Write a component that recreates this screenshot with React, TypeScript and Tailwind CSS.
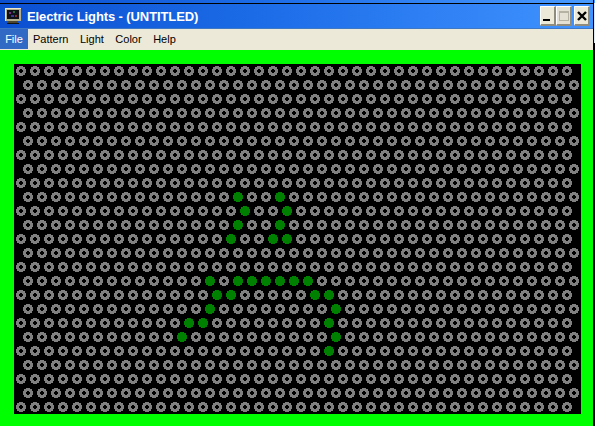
const ROWS = 25
const COLS = 40

// lit lights, keyed by row -> column indexes
const LIT: Record<number, number[]> = {
  9: [15, 18],
  10: [16, 19],
  11: [15, 18],
  12: [15, 18, 19],
  15: [13, 15, 16, 17, 18, 19, 20],
  16: [14, 15, 21, 22],
  17: [13, 22],
  18: [12, 13, 22],
  19: [11, 22],
  20: [22],
}

const DISC = "M3 0h4v1h2v2h1v4h-1v2h-2v1h-4v-1h-2v-2h-1v-4h1v-2h2z"
const HOLE = "M4 3v1h-1v2h1v1h2v-1h1v-2h-1v-1z"

function Light({ on }: { on: boolean }) {
  return (
    <svg width="10" height="10" viewBox="0 0 10 10" shapeRendering="crispEdges" className="shrink-0">
      <path fill={on ? "#008000" : "#808080"} fillRule="evenodd" d={on ? DISC : DISC + HOLE} />
    </svg>
  )
}

function TitleButton({ children, muted }: { children: React.ReactNode; muted?: boolean }) {
  return (
    <div
      className={`flex h-[20px] w-[16px] items-center justify-center rounded-[1px] border-t border-l border-t-white border-l-white border-r-2 border-b-2 border-r-[#8f8c7e] border-b-[#8f8c7e] ${muted ? "bg-[#e4e1d4]" : "bg-[#ece9d8]"}`}
    >
      {children}
    </div>
  )
}

function App() {
  return (
    <div className="flex h-[426px] w-[595px] overflow-hidden bg-black font-['Liberation_Sans',sans-serif]">
      <div className="flex w-[593px] shrink-0 flex-col bg-[#ece9d8]">
        <div className="h-[3px] shrink-0 bg-gradient-to-r from-[#0a4fd0] via-[#1f70ea] to-[#4a9bff]" />
        <div className="flex h-[26px] shrink-0 items-center justify-between border-t border-b border-t-black border-b-[#3f78c4] bg-gradient-to-r from-[#0a4fd0] via-[#1f70ea] to-[#4093ff] pr-[3px] pl-[5px]">
          <div className="flex items-center gap-[5px]">
            <svg width="17" height="17" viewBox="0 0 17 17" shapeRendering="crispEdges">
              <rect x="0" y="0" width="16" height="13" fill="#b3ae8c" />
              <rect x="0" y="0" width="16" height="1" fill="#ece8cc" />
              <rect x="0" y="0" width="1" height="13" fill="#ece8cc" />
              <rect x="2" y="2" width="12" height="9" fill="#101018" />
              <rect x="4" y="4" width="2" height="2" fill="#7a2a80" />
              <rect x="8" y="3" width="2" height="2" fill="#2a6a40" />
              <rect x="6" y="7" width="3" height="2" fill="#3a3a90" />
              <rect x="10" y="7" width="2" height="2" fill="#802a2a" />
              <rect x="3" y="13" width="10" height="2" fill="#4a4530" />
              <rect x="2" y="15" width="12" height="1" fill="#15140c" />
            </svg>
            <span className="text-[13px] leading-none font-bold tracking-[-0.1px] text-white">Electric Lights - (UNTITLED)</span>
          </div>
          <div className="flex items-center">
            <TitleButton>
              <div className="mt-[9px] mr-[2px] h-[2px] w-[7px] bg-black" />
            </TitleButton>
            <TitleButton muted>
              <div className="h-[10px] w-[10px] border border-t-2 border-[#b5b2a4]" />
            </TitleButton>
            <div className="ml-[2px]">
              <TitleButton>
                <svg width="10" height="10" viewBox="0 0 10 10">
                  <path d="M1 1L9 9M9 1L1 9" stroke="#000" strokeWidth="2.4" />
                </svg>
              </TitleButton>
            </div>
          </div>
        </div>
        <div className="flex h-[20px] shrink-0 items-center text-[11px] leading-none text-black">
          <div className="flex h-full w-[28px] items-center justify-center bg-[#316ac5] text-white">File</div>
          <div className="ml-[5px] flex gap-[11.5px]">
            <span>Pattern</span>
            <span>Light</span>
            <span>Color</span>
            <span>Help</span>
          </div>
        </div>
        <div className="h-px shrink-0 bg-[#ece9d8]" />
        <div className="flex-1 bg-[#00ff00] pt-[14px] pl-[14px]">
          <div className="flex h-[350px] w-[567px] flex-col gap-[4px] bg-black pt-[2px] pl-[2px]">
            {Array.from({ length: ROWS }, (_, r) => (
              <div key={r} className={`flex h-[10px] gap-[4px] ${r % 2 ? "pl-[7px]" : "pl-0"}`}>
                {Array.from({ length: COLS }, (_, c) => (
                  <Light key={c} on={(LIT[r] ?? []).includes(c)} />
                ))}
              </div>
            ))}
          </div>
        </div>
      </div>
      <div className="w-px shrink-0 bg-black" />
      <div className="flex w-px shrink-0 flex-col">
        <div className="h-[3px] bg-[#4a9bff]" />
        <div className="h-[40px] bg-[#dfe8f5]" />
      </div>
    </div>
  )
}

export default App
